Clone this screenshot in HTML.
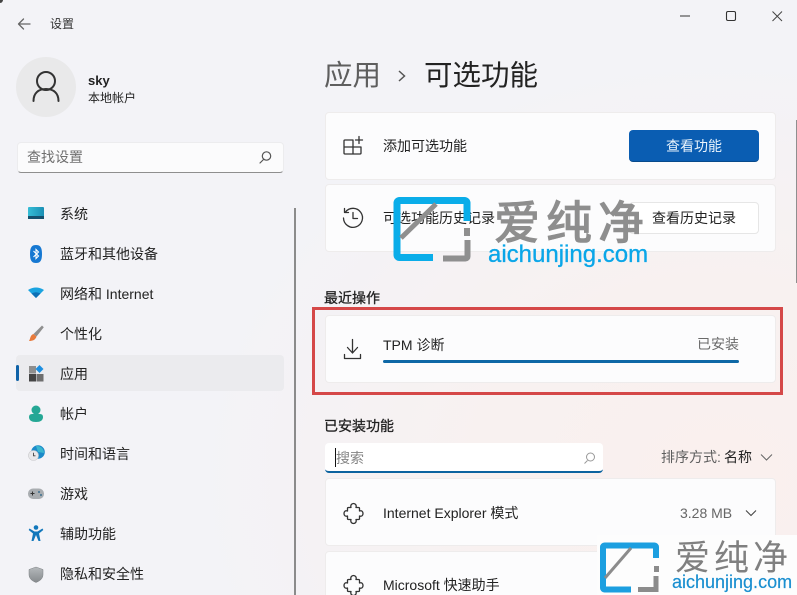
<!DOCTYPE html>
<html lang="zh-CN">
<head>
<meta charset="utf-8">
<title>设置</title>
<style>
html,body{margin:0;padding:0;width:797px;height:595px;overflow:hidden}
body{position:relative;font-family:"Liberation Sans","Noto Sans CJK SC",sans-serif;color:#1b1b1b;background:#f3f3f7}
#r{position:absolute;left:0;top:0;width:797px;height:595px;overflow:hidden;
background:radial-gradient(ellipse 520px 420px at 720px 480px,#faf0ee 0%,#f8f1f0 45%,rgba(243,243,247,0) 100%),#f3f3f7;}
.a{position:absolute;white-space:nowrap;line-height:1}
svg{position:absolute;overflow:visible}
.nav{position:absolute;left:60px;font-size:14px;line-height:20px;height:20px;color:#222;white-space:nowrap}
.card{position:absolute;left:325px;width:449px;height:66px;background:#fcfcfd;border:1px solid #eeecec;border-radius:4px}
.t{position:absolute;left:383px;font-size:14px;line-height:20px;color:#222;white-space:nowrap}
.ln{fill:none;stroke:#333;stroke-width:1.3;stroke-linecap:round;stroke-linejoin:round}
.h{font-size:14px;color:#222;-webkit-text-stroke:.3px #222}
</style>
</head>
<body>
<div id="r">
<!-- sidebar header -->
<div class="a" style="left:0;top:0;width:3px;height:3px;background:#444;border-bottom-right-radius:3px"></div>
<svg style="left:0;top:0" width="40" height="40"><path class="ln" style="stroke:#666" d="M30 24H18.500M23.500 19l-5 5 5 5"/></svg>
<div class="a" style="left:50px;top:18px;font-size:12px;color:#333">设置</div>
<div class="a" style="left:16px;top:57px;width:60px;height:60px;border-radius:50%;background:#e9e9ea"></div>
<svg style="left:0;top:0" width="80" height="110"><circle cx="46" cy="81" r="9" fill="none" stroke="#333" stroke-width="2"/><path d="M33.500 101c0-8 5-12 12.500-12s12.500 4 12.500 12" fill="none" stroke="#333" stroke-width="2" stroke-linecap="round"/></svg>
<div class="a" style="left:88px;top:74px;font-size:13px;font-weight:700;color:#222">sky</div>
<div class="a" style="left:88px;top:92px;font-size:12px;color:#222">本地帐户</div>
<div class="a" style="left:17px;top:142px;width:265px;height:29px;background:#fbfbfc;border-radius:4px;border:1px solid #ececee;border-bottom:1.500px solid #8e8e8e"></div>
<div class="a" style="left:27px;top:150px;font-size:14px;color:#6f6f6f">查找设置</div>
<svg style="left:0;top:0" width="290" height="175"><circle cx="266.500" cy="156" r="4.200" fill="none" stroke="#555" stroke-width="1.200"/><path d="M263.500 159.500L260 163" stroke="#555" stroke-width="1.200" stroke-linecap="round"/></svg>

<!-- selected -->
<div class="a" style="left:16px;top:355px;width:268px;height:36px;background:#ebebee;border-radius:4px"></div>
<div class="a" style="left:16px;top:365px;width:3px;height:16px;background:#0f62a8;border-radius:2px"></div>
<div class="a" style="left:293.500px;top:208px;width:2.500px;height:387px;background:#8b8b8b"></div>

<!-- nav icons -->
<svg style="left:0;top:0" width="60" height="595">
<defs>
<linearGradient id="sys" x1="0" y1="0" x2="1" y2="0"><stop offset="0" stop-color="#35bdd6"/><stop offset="1" stop-color="#1a8fb5"/></linearGradient>
<linearGradient id="sh" x1="0" y1="0" x2="0" y2="1"><stop offset="0" stop-color="#b5b9bc"/><stop offset="1" stop-color="#868a8d"/></linearGradient>
</defs>
<rect x="28" y="207" width="16" height="12" rx="1" fill="url(#sys)"/><rect x="28" y="216" width="16" height="3" fill="#14506e"/>
<path d="M36 245c4 0 6 2 6 9s-2 9-6 9-6-2-6-9 2-9 6-9z" fill="#1678d2"/><path d="M33.500 251l5 5-2.500 2.500v-9l2.500 2.500-5 5" fill="none" stroke="#fff" stroke-width="1.100"/>
<path d="M28 290q8-5 16 0l-8 8z" fill="#1aa3e0"/><path d="M31.500 293.500q4.500-2.500 9 0L36 298z" fill="#0c6fb5"/>
<path d="M42 325.500l1.800 1.700L36.500 336.500l-3-2.500z" fill="#8f8f8f"/><path d="M33.500 334l3 2.500c-1 3.500-4 4.500-7.500 4.500 1.500-2 1-6 4.500-7z" fill="#e77a3c"/>
<rect x="29" y="366" width="7" height="7.500" fill="#8e8e8e"/><rect x="29" y="374" width="7" height="7.500" fill="#444"/><rect x="36.500" y="374" width="7" height="7.500" fill="#6e6e6e"/><path d="M39.500 365l4 4-4 4-4-4z" fill="#1c8ee0"/>
<circle cx="36" cy="410" r="4.500" fill="#25a795"/><path d="M29 417q0-3 3-3h8q3 0 3 3 0 5-7 5t-7-5z" fill="#25a795"/>
<circle cx="38" cy="452" r="6.800" fill="#1c8ac9"/><path d="M36 446a7 7 0 0 1 8 7l-6-1z" fill="#3ab6cf"/><circle cx="33.500" cy="455.500" r="5" fill="#e8e8ea" stroke="#c9c9cc" stroke-width=".6"/><path d="M33.500 452.800v3h2" fill="none" stroke="#444" stroke-width=".9"/>
<rect x="28" y="488.500" width="16" height="10.500" rx="5" fill="#a9adb1"/><path d="M30.500 493.500h4M32.500 491.500v4" stroke="#333" stroke-width="1"/><circle cx="39" cy="492" r="1" fill="#3d6f8f"/><circle cx="41" cy="495" r="1" fill="#3d6f8f"/>
<circle cx="36" cy="527.500" r="2.300" fill="#1177bb"/><path d="M29.500 528.500l5 3h3l5-3 .8 1.500-4.300 3.500 1.500 7.500h-2l-2.500-6-2.500 6h-2l1.500-7.500-4.300-3.500z" fill="#1177bb"/>
<path d="M36 567l7 2.500v5c0 4-3 6.500-7 8-4-1.500-7-4-7-8v-5z" fill="url(#sh)" stroke="#7d8184" stroke-width=".5"/>
</svg>

<div class="nav" style="top:204px">系统</div>
<div class="nav" style="top:244px">蓝牙和其他设备</div>
<div class="nav" style="top:284px">网络和 Internet</div>
<div class="nav" style="top:324px">个性化</div>
<div class="nav" style="top:364px">应用</div>
<div class="nav" style="top:404px">帐户</div>
<div class="nav" style="top:444px">时间和语言</div>
<div class="nav" style="top:484px">游戏</div>
<div class="nav" style="top:524px">辅助功能</div>
<div class="nav" style="top:564px">隐私和安全性</div>

<!-- window controls -->
<svg style="left:0;top:0" width="797" height="30"><path d="M680 16h10" stroke="#333" stroke-width="1"/><rect x="726.500" y="11.500" width="9" height="9" rx="1.500" fill="none" stroke="#333" stroke-width="1.100"/><path d="M772.500 11.500l9.500 9.500M782 11.500L772.500 21" stroke="#444" stroke-width="1"/></svg>
<div class="a" style="left:795.500px;top:120px;width:1.500px;height:163px;background:#8f8f8f"></div>

<!-- title -->
<div class="a" style="left:324px;top:62px;font-size:28.500px;color:#5e5e5e">应用</div>
<svg style="left:0;top:0" width="420" height="90"><path d="M399 71l5.500 5-5.500 5" fill="none" stroke="#555" stroke-width="1.500"/></svg>
<div class="a" style="left:424px;top:62px;font-size:28.500px;color:#222">可选功能</div>

<!-- cards -->
<div class="card" style="top:112px"></div>
<div class="card" style="top:184px"></div>
<div class="card" style="top:315px"></div>
<div class="card" style="top:478px"></div>
<div class="card" style="top:551px;height:60px"></div>

<svg style="left:0;top:0" width="380" height="595">
<path class="ln" d="M345 140h8v14h-8a1 1 0 0 1-1-1v-12a1 1 0 0 1 1-1zM344 147h17M361 147v6a1 1 0 0 1-1 1h-7M355.500 140h7M359 136.500v7"/>
<path class="ln" d="M345.500 212A9.500 9.500 0 1 1 343.500 218M344.500 208.500v4h4M353 212.500v6h4.500"/>
<path class="ln" d="M352.500 339.500v13M347.500 347.500l5 5.500 5-5.500M344.500 354.500v4h16v-4"/>
<path class="ln" d="M348.500 507.500h2.500c-.8-2.500 .8-4 2.500-4s3.300 1.500 2.500 4h2.500a1 1 0 0 1 1 1v2.500c2.500-.8 3.500 .8 3.500 2.500s-1 3.300-3.500 2.500v2.500a1 1 0 0 1-1 1h-2.500c.8 2.500-.8 4-2.500 4s-3.300-1.500-2.500-4h-2.500a1 1 0 0 1-1-1v-2.500c-2.500 .8-3.500-.8-3.500-2.500s1-3.300 3.500-2.500v-2.500a1 1 0 0 1 1-1z"/>
<path class="ln" d="M348.500 579.500h2.500c-.8-2.500 .8-4 2.500-4s3.300 1.500 2.500 4h2.500a1 1 0 0 1 1 1v2.500c2.500-.8 3.500 .8 3.500 2.500s-1 3.300-3.500 2.500v2.500a1 1 0 0 1-1 1h-2.500c.8 2.500-.8 4-2.500 4s-3.300-1.500-2.500-4h-2.500a1 1 0 0 1-1-1v-2.500c-2.500 .8-3.500-.8-3.500-2.500s1-3.300 3.500-2.500v-2.500a1 1 0 0 1 1-1z"/>
</svg>
<div class="t" style="top:136px">添加可选功能</div>
<div class="t" style="top:208px">可选功能历史记录</div>
<div class="t" style="top:335px">TPM 诊断</div>
<div class="a" style="left:697px;top:337px;font-size:14px;color:#6a6a6a">已安装</div>
<div class="a" style="left:383px;top:360px;width:356px;height:3px;background:#0e68a6;border-radius:2px"></div>

<div class="a" style="left:629px;top:130px;width:130px;height:32px;background:#0a5db2;border-radius:4px;border-bottom:1px solid #084a8c;box-sizing:border-box"></div>
<div class="a" style="left:666px;top:139px;font-size:14px;color:#e8f3fc">查看功能</div>
<div class="a" style="left:629px;top:202px;width:130px;height:32px;background:#fff;border:1px solid #e6e6e6;border-radius:4px;box-sizing:border-box"></div>
<div class="a" style="left:652px;top:211px;font-size:14px;color:#222">查看历史记录</div>

<!-- red box -->
<div class="a" style="left:312px;top:307px;width:471px;height:88px;border:3px solid #d54848;box-sizing:border-box"></div>

<!-- section heads -->
<div class="a h" style="left:324px;top:291px">最近操作</div>
<div class="a h" style="left:324px;top:419px">已安装功能</div>

<!-- search -->
<div class="a" style="left:325px;top:443px;width:278px;height:30px;background:#fff;border-radius:4px;border-bottom:2px solid #0c639f;box-sizing:border-box"></div>
<div class="a" style="left:335px;top:448px;width:1px;height:19px;background:#111"></div>
<div class="a" style="left:336px;top:451px;font-size:14px;color:#858585">搜索</div>
<svg style="left:0;top:0" width="610" height="475"><circle cx="590.500" cy="457" r="4" fill="none" stroke="#999" stroke-width="1"/><path d="M587.500 460.500L584.500 463.500" stroke="#999" stroke-width="1"/></svg>
<div class="a" style="left:661px;top:450px;font-size:14px;color:#5e5e5e">排序方式:</div>
<div class="a" style="left:724px;top:450px;font-size:14px;color:#222">名称</div>
<svg style="left:0;top:0" width="797" height="530"><path d="M761 454.500l5.500 5.500 5.500-5.500" fill="none" stroke="#666" stroke-width="1"/><path d="M746 510.500l5 5 5-5" fill="none" stroke="#444" stroke-width="1.100"/></svg>

<div class="t" style="top:503px">Internet Explorer 模式</div>
<div class="a" style="left:680px;top:506px;font-size:14px;color:#666">3.28 MB</div>
<div class="t" style="top:575px">Microsoft 快速助手</div>

<!-- watermark 1 -->
<svg style="left:0;top:0" width="797" height="595">
<path d="M467 221V203a2.500 2.500 0 0 0-2.500-2.500H399.500a2.500 2.500 0 0 0-2.500 2.500v52a2.500 2.500 0 0 0 2.500 2.500H433" fill="none" stroke="#0aade9" stroke-width="7"/>
<path d="M436 204L401 238" stroke="#8f8f8f" stroke-width="5"/>
<rect x="464" y="228" width="6" height="8" fill="#8f8f8f"/>
<path d="M443 258.500h22.500a2 2 0 0 0 2-2V240" fill="none" stroke="#8f8f8f" stroke-width="6"/>
</svg>
<div class="a" style="left:494px;top:200px;font-size:46px;font-weight:500;color:#8e8e8e;letter-spacing:6px;-webkit-text-stroke:.6px #8e8e8e">爱纯净</div>
<div class="a" style="left:488px;top:243px;font-size:24px;color:#0aa6e8;-webkit-text-stroke:.3px #0aa6e8">aichunjing.com</div>

<!-- watermark 2 -->
<div class="a" style="left:597px;top:535px;width:200px;height:60px;background:#fdfdfd"></div>
<svg style="left:0;top:0" width="797" height="595">
<path d="M656 558V547a1.500 1.500 0 0 0-1.500-1.500H604.500a1.500 1.500 0 0 0-1.500 1.500v41a1.500 1.500 0 0 0 1.500 1.500H631" fill="none" stroke="#1c9fe0" stroke-width="6"/>
<path d="M631 548L605 578" stroke="#8c8c8c" stroke-width="3"/>
<rect x="654" y="566" width="5" height="6" fill="#8c8c8c"/>
<path d="M638 589.500h18V576" fill="none" stroke="#8c8c8c" stroke-width="5"/>
</svg>
<div class="a" style="left:675px;top:541px;font-size:35px;color:#808080;letter-spacing:4px">爱纯净</div>
<div class="a" style="left:672px;top:573px;font-size:18px;color:#1a8fd0;-webkit-text-stroke:.2px #1a8fd0">aichunjing.com</div>
</div>
</body>
</html>
